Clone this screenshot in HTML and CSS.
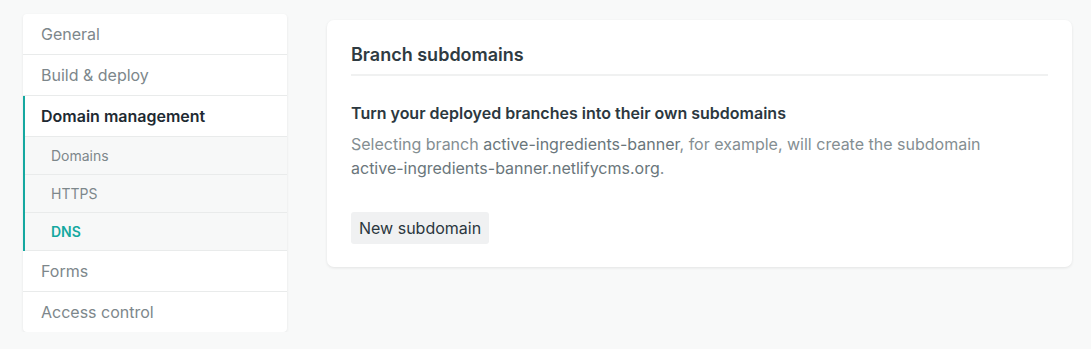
FILE: index.html
```html
<!DOCTYPE html>
<html>
<head>
<meta charset="utf-8">
<link rel="stylesheet" href="styles.css">
</head>
<body>
<div class="page">
  <nav class="sidenav">
    <a class="nav-item">General</a>
    <a class="nav-item">Build &amp; deploy</a>
    <div class="nav-group">
      <a class="nav-item active">Domain management</a>
      <a class="nav-sub">Domains</a>
      <a class="nav-sub">HTTPS</a>
      <a class="nav-sub current">DNS</a>
    </div>
    <a class="nav-item">Forms</a>
    <a class="nav-item last">Access control</a>
  </nav>
  <main class="content">
    <section class="card">
      <h2 class="card-title">Branch subdomains</h2>
      <h3 class="card-subtitle">Turn your deployed branches into their own subdomains</h3>
      <p class="card-text">Selecting branch <span class="code">active-ingredients-banner</span>, for example, will create the subdomain <span class="code">active-ingredients-banner.netlifycms.org</span>.</p>
      <button class="btn">New subdomain</button>
    </section>
  </main>
</div>
</body>
</html>
```
FILE: styles.css
```css
* { box-sizing: border-box; }
html, body { margin: 0; padding: 0; }
body {
  background: #f8f9f9;
  font-family: Inter, "Liberation Sans", Arial, sans-serif;
  -webkit-font-smoothing: antialiased;
}
.page {
  display: flex;
  align-items: flex-start;
  padding: 14px 0 0 23px;
  gap: 40px;
}
.sidenav {
  width: 264px;
  flex: none;
  display: flex;
  flex-direction: column;
  background: #fff;
  border-radius: 4px;
  box-shadow: 0 1px 3px rgba(0,0,0,0.08);
  overflow: hidden;
}
.nav-item {
  display: flex;
  align-items: center;
  height: 41px;
  padding: 0 18px;
  border-bottom: 1px solid #e9ebeb;
  font-size: 16px;
  color: #7d878b;
}
.nav-item.last { border-bottom: none; height: 40px; }
.nav-group {
  display: flex;
  flex-direction: column;
  border-left: 2px solid #15a8a0;
}
.nav-group .nav-item { padding-left: 16px; }
.nav-item.active {
  color: #1e2a32;
  font-weight: 600;
}
.nav-sub {
  display: flex;
  align-items: center;
  height: 38px;
  padding: 0 26px;
  background: #f7f8f8;
  border-bottom: 1px solid #e9ebeb;
  font-size: 14px;
  color: #7d878b;
}
.nav-sub.current {
  color: #15a8a0;
  font-weight: 600;
}
.content {
  flex: none;
  width: 745px;
  padding-top: 6px;
}
.card {
  background: #fff;
  border-radius: 7px;
  box-shadow: 0 1px 3px rgba(0,0,0,0.09);
  padding: 24px 24px 23px;
}
.card-title {
  margin: 0;
  font-size: 18px;
  font-weight: 600;
  color: #2f3b42;
  line-height: 22px;
  padding-bottom: 8px;
  border-bottom: 2px solid #f0f1f1;
}
.card-subtitle {
  margin: 27px 0 0;
  font-size: 16px;
  font-weight: 600;
  color: #2c3840;
  line-height: 20px;
}
.card-text {
  margin: 9px 0 0;
  font-size: 16px;
  line-height: 24px;
  color: #848e92;
}
.code { color: #6a767b; white-space: nowrap; }
.btn {
  display: block;
  margin-top: 32px;
  height: 32px;
  padding: 0 8px;
  border: none;
  border-radius: 3px;
  background: #f0f1f2;
  font-family: inherit;
  font-size: 16px;
  color: #2b373e;
}
```
